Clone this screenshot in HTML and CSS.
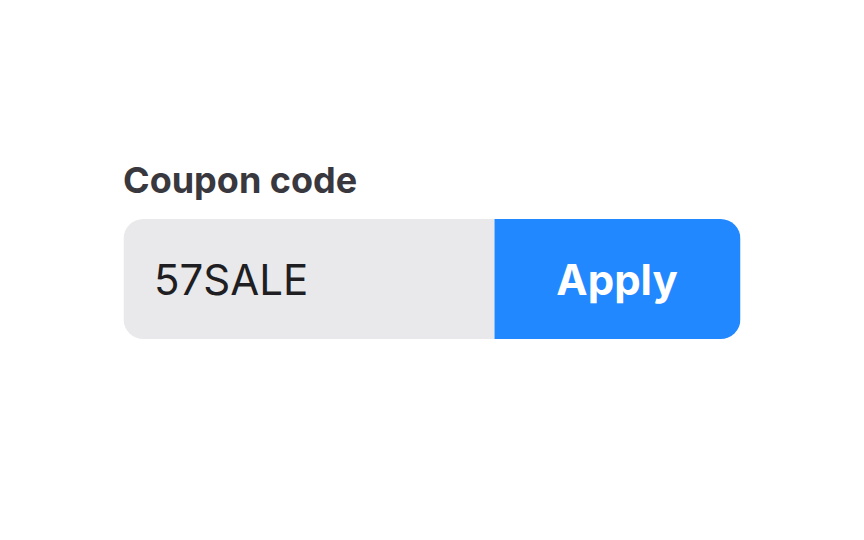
FILE: index.html
```html
<!DOCTYPE html>
<html lang="en">
<head>
  <meta charset="UTF-8">
  <title>Coupon code</title>
  <link rel="stylesheet" href="styles.css">
</head>
<body>
  <div class="coupon">
    <label class="coupon-label" for="coupon">Coupon code</label>
    <div class="coupon-row">
      <input type="text" id="coupon" class="coupon-input" value="57SALE">
      <button class="coupon-apply">Apply</button>
    </div>
  </div>
</body>
</html>
```
FILE: styles.css
```css
body {
  margin: 0;
  background: #fff;
  font-family: Inter, "Noto Sans", sans-serif;
}

.coupon {
  width: 617px;
  margin: 0 auto;
  padding-top: 158px;
  display: flex;
  flex-direction: column;
  gap: 17px;
  transform: translateX(-0.5px);
}

.coupon-label {
  font-size: 36px;
  font-weight: 700;
  color: #38383e;
  line-height: 44px;
}

.coupon-row {
  display: flex;
  height: 120px;
  border-radius: 20px;
  overflow: hidden;
}

.coupon-input {
  width: 371px;
  box-sizing: border-box;
  border: none;
  background: #e9e9eb;
  padding: 0 0 0 31px;
  font-family: inherit;
  font-size: 42px;
  color: #1e1e23;
  outline: none;
}

.coupon-apply {
  flex: 1;
  border: none;
  background: #2288ff;
  color: #fff;
  font-family: inherit;
  font-size: 42px;
  font-weight: 700;
  cursor: pointer;
}
```
